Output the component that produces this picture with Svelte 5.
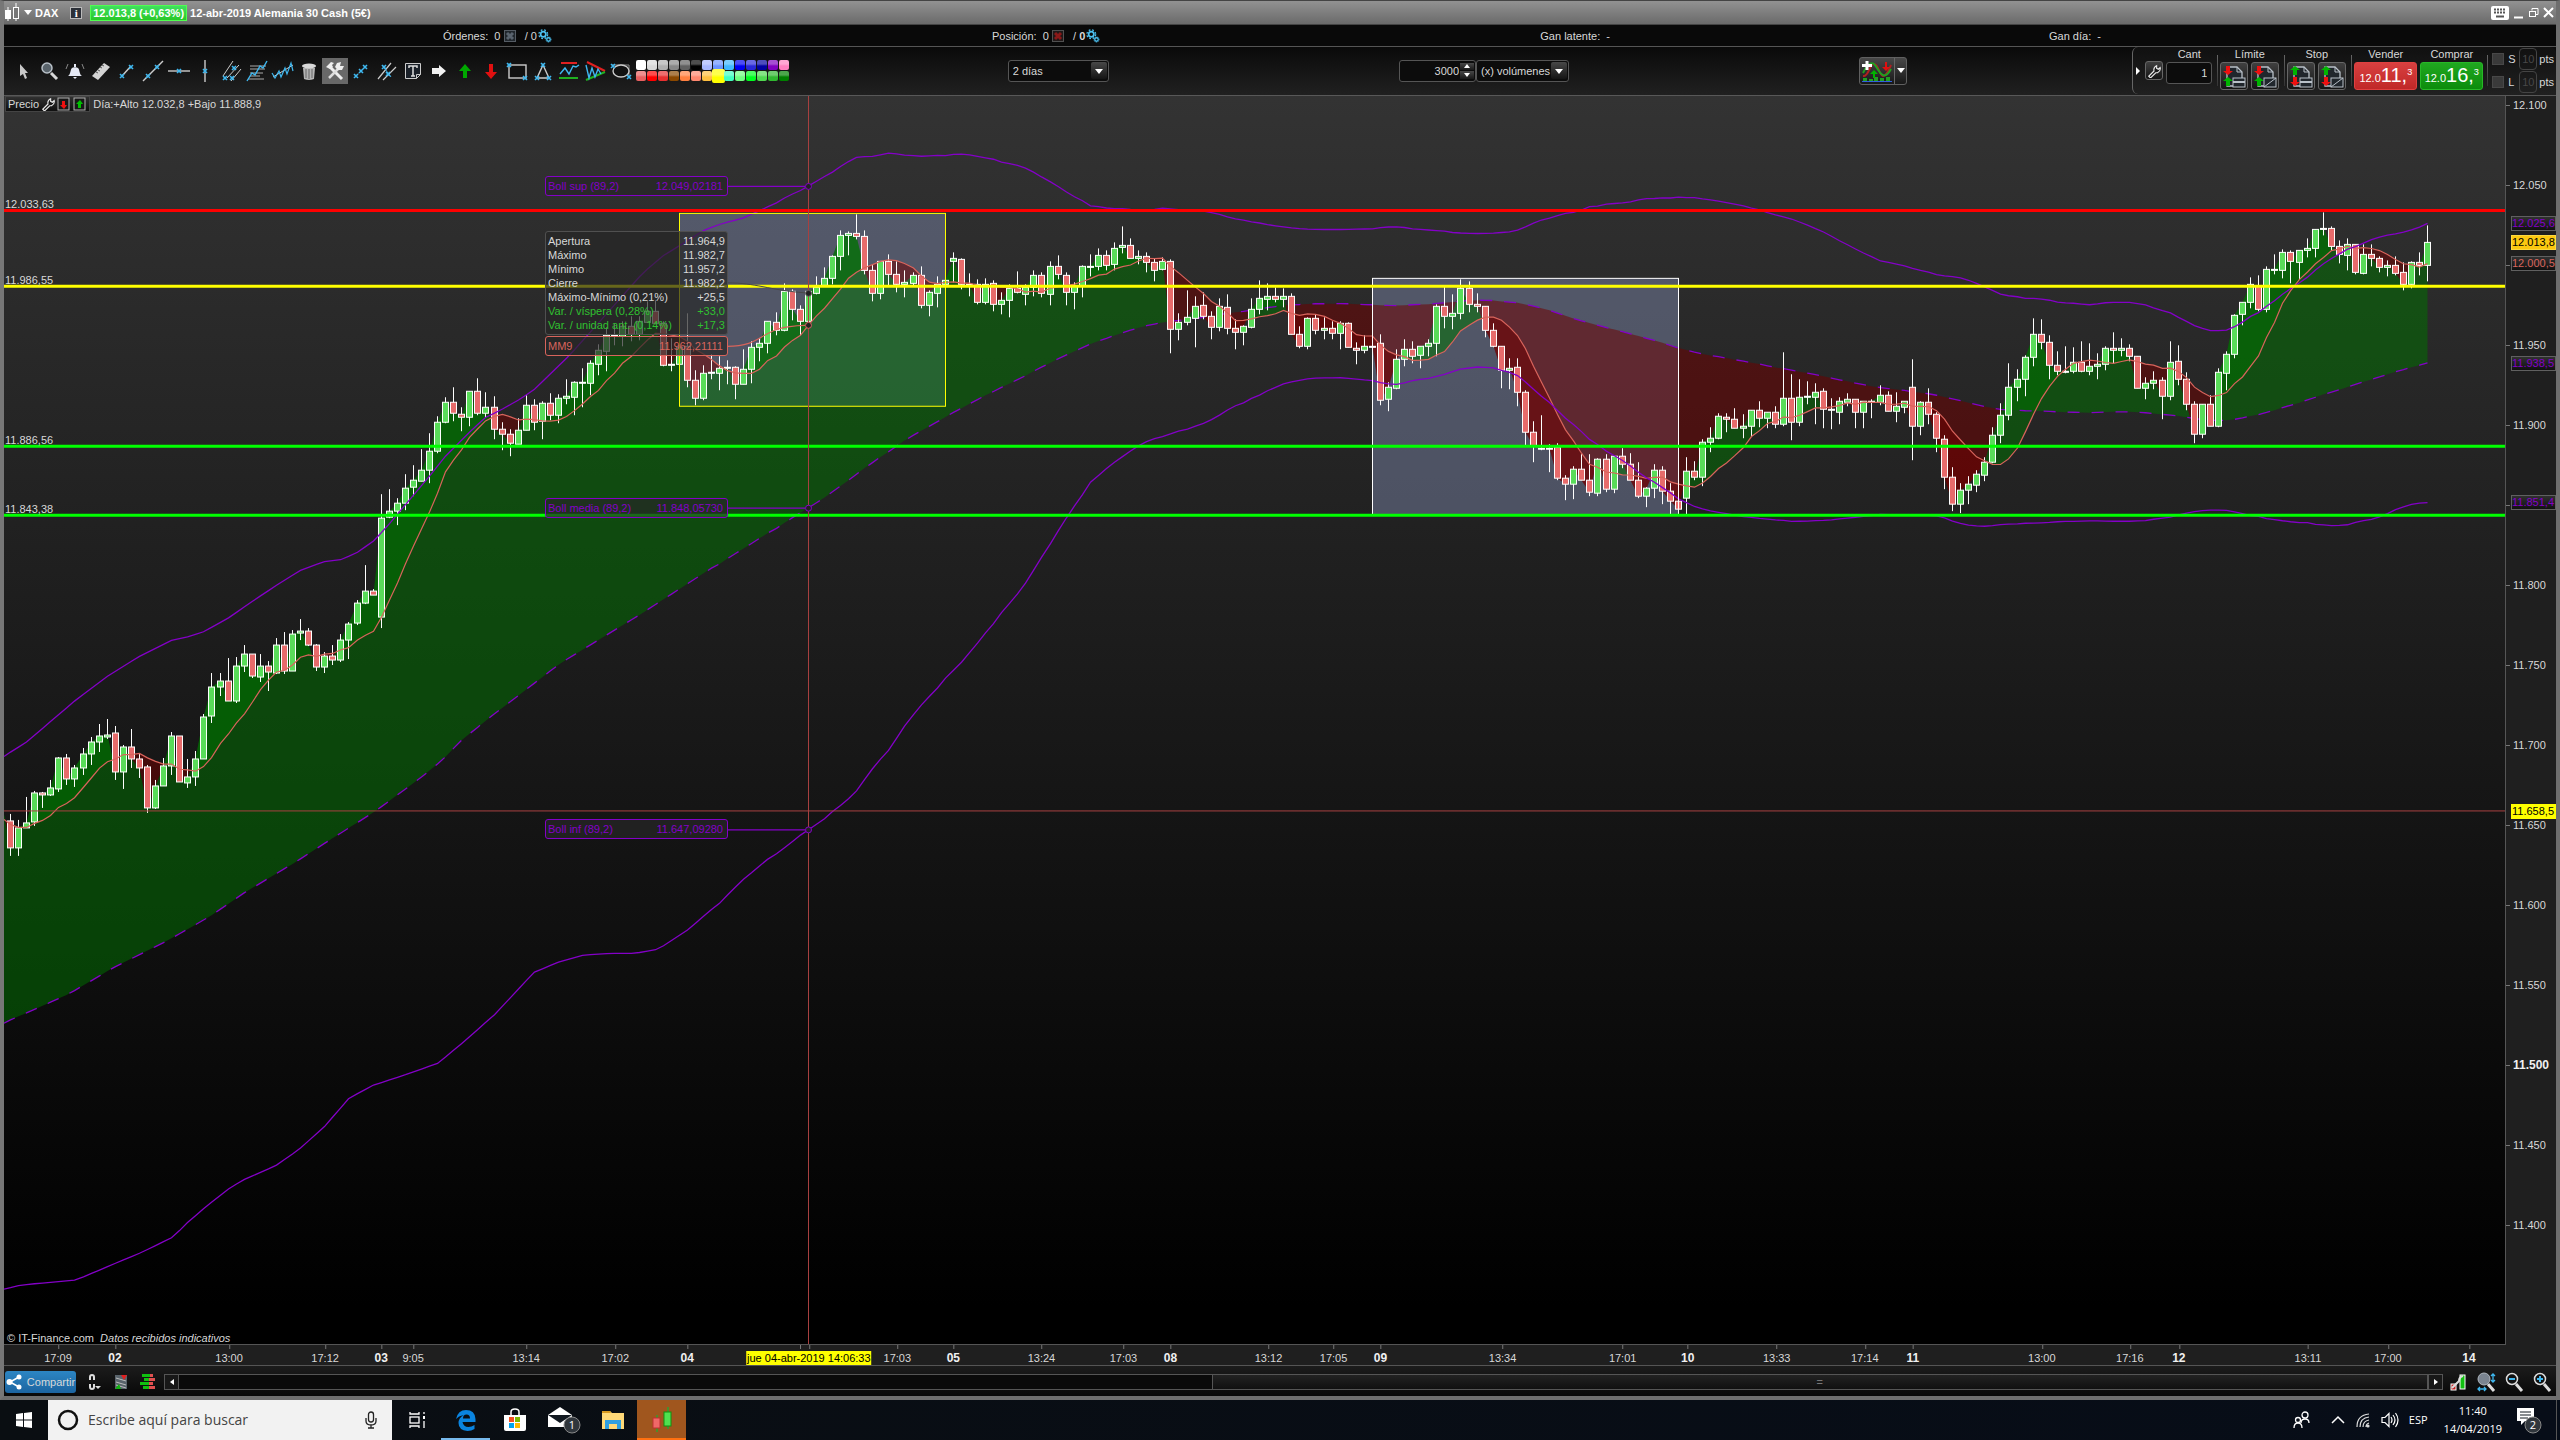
<script>
    // plot area in chart units
    const LEFT = 4;
    const TOP = 96;
    const WIDTH = 2501;
    const HEIGHT = 1249;

    // direction, high, body top, body bottom, low
    const sessions = [
        { base: 1110, bars: `d1332,1354,1434,1460 u1350,1375,1434,1460 u1282,1359,1376,1376 u1263,1270,1358,1370 d1266,1270,1277,1314
            u1230,1255,1277,1280 u1161,1165,1259,1268 d1152,1165,1229,1247 u1186,1195,1229,1253 u1134,1153,1196,1215
            u1101,1117,1154,1187 u1062,1099,1118,1148 u1047,1095,1103,1109 d1068,1090,1206,1232 u1125,1132,1206,1257
            d1077,1132,1169,1196 d1153,1168,1196,1226 d1187,1192,1314,1329 u1230,1249,1314,1317 u1164,1189,1250,1250
            u1086,1099,1190,1217 d1099,1099,1238,1238 u1167,1222,1239,1256 u1143,1168,1223,1250 u1032,1042,1169,1169
            u909,952,1040,1061 u909,934,953,978 d866,934,995,995 u861,889,995,1001 u825,853,890,908
            d853,853,920,926 u852,889,923,938 d873,889,908,963 u804,826,911,914 d786,826,905,914
            u780,794,905,905 u747,785,791,812 d774,784,827,830 d823,826,893,905 u846,859,893,911
            d825,859,872,887 u792,811,872,878 u757,763,812,869 u690,700,761,767 u585,664,701,704
            d657,664,677,677 u372,445,743,776 u357,424,443,446 u384,400,425,467 u312,355,401,422
            u285,331,353,380 u237,301,335,335 u189,244,302,341 u138,157,245,251 u81,97,158,161
            d51,97,131,153 d111,133,143,185 u64,64,143,170 d24,64,131,137 u66,111,131,143
            d78,112,179,207 d156,178,194,240 d178,193,221,258 u144,181,224,224 u75,106,182,182
            d87,106,158,182 u94,100,155,207 d69,100,137,152 u74,85,137,161` },
        { base: 450, bars: `u687,738,746,762 u693,696,741,797 w654,696,699,771 u630,639,699,737 u582,600,642,675
            u532,556,603,665 w520,556,558,585 u515,528,558,588 d500,528,553,575 u500,514,552,570
            u453,484,516,516 d450,484,520,522 d515,520,647,650 w565,643,647,665 u570,592,644,644
            d489,590,692,713 d660,690,746,767 u645,670,746,752 w612,667,671,687 u618,655,671,720
            w630,652,656,702 d650,651,704,747 u597,657,704,704 u573,591,659,699 u565,579,593,635
            u513,514,581,609 d486,516,540,557 u399,424,540,545 d417,423,479,510 d465,477,513,557
            u420,424,513,513 u378,413,431,434 u351,384,405,405 u315,318,386,402 u240,255,320,360
            u245,249,257,315 d192,249,260,269 d240,258,362,372 d344,360,431,453 u334,334,431,447
            d312,334,374,405 d333,373,404,428 u362,396,404,441 u366,375,399,407 d348,376,467,476
            u420,426,467,498 u378,402,429,471 u385,390,402,402 u306,324,335,396 d324,327,403,417` },
        { base: 540, bars: `w279,313,316,348 d297,313,366,372 u294,313,366,374 d300,310,374,395 u338,361,374,402
            u312,325,362,411 d273,324,338,339 u312,322,344,377 u270,286,322,350 d277,286,341,353
            u243,259,344,377 d225,259,284,299 d277,286,338,375 u307,320,338,387 u255,259,320,353
            w222,259,261,290 u204,226,260,272 d210,226,257,272 u186,205,254,270 u138,195,203,219
            d174,195,236,236 u210,228,235,254 d216,229,248,276 d234,247,272,303 u231,244,269,272
            d237,244,449,519 u399,427,449,480 u330,411,428,437 u350,379,416,501 d336,376,410,417
            d393,409,443,477 u354,379,443,455 d342,382,446,464 d417,445,458,507 u435,439,458,495
            u354,388,443,446 u300,355,389,404 u309,349,359,392 d321,349,359,366 u325,349,359,381
            d339,349,464,464 d438,463,500,504 u412,415,500,507 d403,415,452,462 u411,445,451,477
            d423,444,461,479 u424,430,461,507 d427,430,503,503 d486,504,511,552 u465,499,512,521
            w470,499,503,503 d462,490,660,675 u606,622,659,693 u507,538,626,628 u477,508,539,558
            d483,508,530,551 u499,499,527,564 u477,490,500,530 u372,379,491,530 d320,379,410,444
            u342,400,410,447` },
        { base: 750, bars: `u87,115,191,209 d93,115,164,186 d129,163,170,186 d169,169,242,261 d219,241,290,291
            d289,289,362,414 u324,354,362,417 d324,352,428,468 d420,427,548,585 d513,547,588,636
            w495,594,598,602 w583,595,598,666 d579,592,686,692 d675,685,704,750 u648,658,704,747
            d612,658,692,692 d612,691,728,738 u625,628,731,738 d612,628,719,726 u619,619,719,729
            d594,619,644,654 d609,643,692,692 d636,691,740,744 u711,715,740,771 u642,661,716,744
            d648,661,725,762 d700,724,755,792 d750,754,779,792 u621,664,746,792 d633,664,683,690
            u567,577,683,708 u531,565,578,606 u489,499,566,569 d489,502,509,546 d474,508,536,536
            u492,530,536,564 u481,481,530,558 d453,481,506,531 u487,487,506,534 d468,487,524,536
            u306,445,524,528 d372,445,518,570 u387,442,518,528 w393,439,443,462 u399,427,443,522
            d415,424,479,536 w444,478,482,537 u441,454,486,522 u429,449,456,468 d448,448,488,534
            u454,455,488,534 w447,454,456,504 u405,436,458,467 d423,436,485,485 u426,469,485,516` },
        { base: 540, bars: `u663,664,683,699 d537,622,738,840 u663,667,738,765 d624,667,704,732 d697,703,776,816
            d766,778,893,927 d861,892,974,993 u909,931,974,999 u888,913,932,972 u870,882,917,938
            u831,847,885,903 u741,766,848,851 u669,706,767,789 u549,622,707,720 u567,598,623,663
            u525,532,599,648 u414,463,533,558 d417,463,488,507 d465,487,557,597 d513,556,575,585
            w498,573,577,580 u501,547,575,580 d483,547,575,576 u489,559,575,585 u519,553,560,597
            u499,505,554,570 d456,505,512,550 u474,505,512,529 d492,505,530,543 d528,529,626,626
            u591,610,626,657 u573,601,611,627 d591,601,650,717 u483,547,650,660 d495,544,599,615
            d576,598,674,690 d663,673,764,789 u673,673,764,774 d645,673,738,738 u564,577,738,741
            u513,523,581,630 u402,406,524,534 u367,367,404,435 u291,313,368,384 d285,318,389,393
            u258,268,389,396 w222,268,272,282 u207,217,272,294 d210,217,245,309 u211,211,248,297
            u174,205,211,231 u147,148,206,231 w96,145,149,165 d138,145,200,210 d180,199,224,249
            u174,193,227,270 d193,193,278,282 u193,223,281,282 d192,223,236,260 d229,235,263,276
            u240,256,263,288 d229,256,281,285 d247,277,314,330 u243,247,314,326 d216,247,257,285
            u135,187,257,303` }
    ];

    const snap = (v) => Math.round(v - 0.5) + 0.5;

    const candles = sessions
        .flatMap((s) => s.bars.split(/\s+/).map((bar) => ({ base: s.base, bar })))
        .map(({ base, bar }, i) => {
            const [high, top, bottom, low] = bar.slice(1).split(',').map((v) => snap((Number(v) + base) / 3));
            return { x: 10.5 + 8 * i + Math.floor((i + 9) / 17.2), kind: bar[0], high, top, bottom, low };
        });

    const closes = candles.map((c) => (c.kind === 'd' ? c.bottom : c.top));

    // values carried over from bars before the first visible one
    const mmStart = [825, 828, 828, 824, 821, 816, 808, 804];
    const supStart = [[5, 756], [26, 743], [74, 702], [107, 677], [139, 657], [171, 641], [189, 637], [204, 632], [229, 618],
        [252, 602], [276, 586], [300, 571], [324, 562], [341, 560], [357, 553], [374, 541], [386, 528], [397, 515], [429, 477],
        [445, 457], [469, 433], [485, 418], [503, 409], [519, 400], [534, 390], [570, 355], [643, 273], [663, 256], [703, 231], [720, 224]];
    const midStart = [[5, 1023], [35, 1010], [70, 994], [114, 968], [168, 941], [210, 917], [245, 893], [295, 863], [337, 836],
        [375, 812], [421, 778], [442, 761], [460, 742], [491, 717], [560, 664], [640, 615], [720, 563]];
    const infStart = [[5, 1290], [21, 1286], [42, 1284], [76, 1281], [116, 1264], [140, 1254], [173, 1238], [188, 1223], [209, 1205],
        [231, 1188], [245, 1180], [275, 1167], [298, 1151], [324, 1128], [349, 1099], [373, 1086], [407, 1075], [438, 1064],
        [462, 1044], [495, 1015], [534, 973], [558, 963], [582, 956], [610, 954], [635, 954], [658, 950], [687, 931], [720, 903]];

    function lerp(knots, x) {
        const k = knots.findIndex((p) => p[0] >= x);
        if (k < 1) return k === 0 ? knots[0][1] : knots[knots.length - 1][1];
        const [x0, y0] = knots[k - 1];
        const [x1, y1] = knots[k];
        return y0 + ((y1 - y0) * (x - x0)) / (x1 - x0);
    }

    function stats(i, n) {
        const part = closes.slice(i - n + 1, i + 1);
        const mean = part.reduce((a, b) => a + b, 0) / n;
        const dev = Math.sqrt(part.reduce((a, b) => a + (b - mean) ** 2, 0) / n);
        return { mean, dev };
    }

    const mm9 = closes.map((c, i) => (i < 8 ? mmStart[i] : stats(i, 9).mean));
    const boll = candles.map((c, i) => {
        if (i < 88) return { sup: lerp(supStart, c.x), mid: lerp(midStart, c.x), inf: lerp(infStart, c.x) };
        const { mean, dev } = stats(i, 89);
        return { sup: mean - 2 * dev, mid: mean, inf: mean + 2 * dev };
    });

    const xs = [LEFT, ...candles.map((c) => c.x)];
    const price = [815, ...closes];
    const fast = [820, ...mm9];
    const sup = [757, ...boll.map((b) => b.sup)];
    const mid = [1024, ...boll.map((b) => b.mid)];
    const inf = [1290, ...boll.map((b) => b.inf)];

    const line = (ys) => xs.map((x, i) => `${x},${ys[i].toFixed(1)}`).join(' ');

    // area between two series, kept only where pick() chooses the first one
    function area(a, b, pick) {
        const upper = [];
        const lower = [];
        xs.forEach((x, i) => {
            if (i > 0) {
                const d0 = a[i - 1] - b[i - 1];
                const d1 = a[i] - b[i];
                if (d0 * d1 < 0) {
                    const t = d0 / (d0 - d1);
                    const cx = xs[i - 1] + (x - xs[i - 1]) * t;
                    const cy = a[i - 1] + (a[i] - a[i - 1]) * t;
                    upper.push([cx, cy]);
                    lower.push([cx, cy]);
                }
            }
            upper.push([x, pick(a[i], b[i])]);
            lower.push([x, b[i]]);
        });
        return [...upper, ...lower.reverse()].map((p) => p[0].toFixed(1) + ',' + p[1].toFixed(1)).join(' ');
    }

    const fills = [
        { kind: 'rise', points: area(price, mid, Math.min) },
        { kind: 'fall', points: area(price, mid, Math.max) },
        { kind: 'rise', points: area(price, fast, Math.min) },
        { kind: 'fall', points: area(price, fast, Math.max) }
    ];

    const levels = [
        { label: '12.033,63', y: 210.5, color: '#ff0000' },
        { label: '11.986,55', y: 286.5, color: '#ffff00' },
        { label: '11.886,56', y: 446.5, color: '#00ff00' },
        { label: '11.843,38', y: 515.5, color: '#00ff00' }
    ];

    const priceTicks = ['12.100', '12.050', '', '11.950', '11.900', '', '11.800', '11.750', '11.700', '11.650', '11.600', '11.550', '11.500', '11.450', '11.400']
        .map((label, i) => ({ label, y: 104.5 + i * 80.05 }));

    const tags = [
        { label: '12.025,6', y: 223, kind: 'boll' },
        { label: '12.000,5', y: 263, kind: 'mm' },
        { label: '12.013,8', y: 242, kind: 'last' },
        { label: '11.938,5', y: 363, kind: 'boll' },
        { label: '11.851,4', y: 502, kind: 'boll' },
        { label: '11.658,5', y: 811, kind: 'cursor' }
    ];

    const times = [['17:09', 58], ['02', 115], ['13:00', 229], ['17:12', 325], ['03', 381], ['9:05', 413], ['13:14', 526], ['17:02', 615],
        ['04', 687], ['', 800], ['17:03', 897], ['05', 953], ['13:24', 1041], ['17:03', 1123], ['08', 1170], ['13:12', 1268], ['17:05', 1333],
        ['09', 1380], ['13:34', 1502], ['17:01', 1622], ['10', 1687], ['13:33', 1776], ['17:14', 1864], ['11', 1912], ['13:00', 2041],
        ['17:16', 2129], ['12', 2178], ['13:11', 2307], ['17:00', 2387], ['14', 2468]];

    const quote = [
        ['Apertura', '11.964,9'],
        ['Máximo', '11.982,7'],
        ['Mínimo', '11.957,2'],
        ['Cierre', '11.982,2'],
        ['Máximo-Mínimo (0,21%)', '+25,5'],
        ['Var. / víspera (0,28%)', '+33,0'],
        ['Var. / unidad ant. (0,14%)', '+17,3']
    ];

    const readouts = [
        { name: 'Boll sup (89,2)', value: '12.049,02181', y: 176, kind: 'boll' },
        { name: 'MM9', value: '11.962,21111', y: 336, kind: 'mm' },
        { name: 'Boll media (89,2)', value: '11.848,05730', y: 498, kind: 'boll' },
        { name: 'Boll inf (89,2)', value: '11.647,09280', y: 820, kind: 'boll' }
    ];

    const px = (x) => ((x - LEFT) / WIDTH) * 100 + '%';
    const py = (y) => ((y - TOP) / HEIGHT) * 100 + '%';

    const cross = (x, y) => `<path d="M${x - 2} ${y - 2}l4 4m0-4l-4 4" stroke="#3fb8f0" stroke-width="1.6"/>`;

    const tools = [
        { name: 'Cursor', art: '<path d="M9 5v12l3-2 2 5 2-1-2-5h3z" fill="#c8c8c8"/>' },
        { name: 'Zoom', art: '<path d="M14 14l6 6" stroke="#d8d8d8" stroke-width="3"/><circle cx="10" cy="9" r="5" fill="#59636b" stroke="#b8c0c8" stroke-width="1.5"/>' },
        { name: 'Alarma', art: '<path d="M5 17c3-2 2-6 4-8 1-1 5-1 6 0 2 2 1 6 4 8z" fill="#e4e8f4"/><path d="M10 18h4l-2 2zM11 5h2v3h-2z" fill="#e4e8f4"/><path d="M5 5L3 10M19 5l2 5" stroke="#888" fill="none"/>' },
        { name: 'Regla', art: '<path d="M3 17L15 4l6 4L9 21z" fill="#d4d4d4"/><path d="M7 13l2 1m0-3l2 1m0-4l2 1m0-3l2 1" stroke="#555"/>' },
        { name: 'Segmento', art: '<path d="M7 17l9-10" stroke="#ccc" stroke-width="1.4"/>' + cross(7, 17) + cross(16, 8) },
        { name: 'Recta', art: '<path d="M2 22L22 2" stroke="#ccc" stroke-width="1.4"/>' + cross(7, 17) + cross(16, 8) },
        { name: 'Horizontal', art: '<path d="M1 12h22" stroke="#ccc" stroke-width="1.4"/>' + cross(12, 12) },
        { name: 'Vertical', art: '<path d="M12 1v22" stroke="#ccc" stroke-width="1.4"/>' + cross(12, 12) },
        { name: 'Canal', art: '<path d="M4 17L14 2M8 19L20 6M12 22L22 10" stroke="#ccc"/>' + cross(6, 19) + cross(13, 19) + cross(15, 9) },
        { name: 'Fibonacci', art: '<path d="M5 7h16M5 10h15M5 14h13M5 17h10M3 20h16" stroke="#aaa"/><path d="M2 22l5-8 3 2 5-9 3 2 4-7" stroke="#3fb8f0" fill="none" stroke-width="1.4"/>' },
        { name: 'Regresión', art: '<path d="M2 18L22 6" stroke="#ccc"/><path d="M1 14l3 5 4-7 2 6 4-9 2 6 4-11 2 8" stroke="#3fb8f0" fill="none" stroke-width="1.2"/>' },
        { name: 'Borrar', art: '<path d="M6 9h12l-1 11q-5 2-10 0z" fill="#b4b4b4"/><ellipse cx="12" cy="7" rx="7" ry="2.500" fill="#d8d8d8"/><path d="M9 10v9M12 10v10M15 10v9" stroke="#666"/>' },
        { name: 'Ajustes', on: true, art: '<path d="M7 8l12 12" stroke="#eee" stroke-width="3"/><path d="M17 8L6 19" stroke="#ddd" stroke-width="2.500"/><path d="M3 8l5-5 3 1-2 2 1 2-3 2-2-1zM14 4l4-1-1 4 4 0-2 4-4 0-3-3z" fill="#eee"/>' },
        { name: 'Mover punto', art: '<path d="M7 17L17 7" stroke="#ccc" stroke-dasharray="3 1"/>' + cross(7, 17) + cross(16, 8) + cross(12, 12) },
        { name: 'Paralelas', art: '<path d="M3 20L16 4M8 21L21 8" stroke="#ccc" stroke-width="1.2"/>' + cross(9, 8) + cross(13, 15) + '<path d="M7 6l9 12" stroke="#3fb8f0"/>' },
        { name: 'Texto', art: '<path d="M4.500 4.500h15v11l-4 4h-11z" fill="#1a2028" stroke="#ccc"/><path d="M15.500 19.500v-4h4" fill="none" stroke="#ccc"/><path d="M8 9V7h8v2M12 7v10m-2 0h4" stroke="#ddd" fill="none" stroke-width="1.500"/>' },
        { name: 'Flecha derecha', art: '<path d="M5 9h7V6l7 6-7 6v-3H5z" fill="#f2f2f2"/>' },
        { name: 'Flecha arriba', art: '<path d="M12 5l6 7h-4v7h-4v-7H6z" fill="#00a800"/>' },
        { name: 'Flecha abajo', art: '<path d="M12 20l6-7h-4V5h-4v8H6z" fill="#e01010"/>' },
        { name: 'Rectángulo', art: '<rect x="4" y="6" width="17" height="13" fill="#111" stroke="#ccc" stroke-width="1.400"/>' + cross(4, 6) + cross(20, 19) },
        { name: 'Triángulo', art: '<path d="M12 6l6 13H6z" fill="none" stroke="#ccc" stroke-width="1.400"/>' + cross(12, 6) + cross(6, 19) + cross(18, 19) },
        { name: 'Soporte', art: '<path d="M4 4h16" stroke="#e02020" stroke-width="2"/><path d="M2 19h19" stroke="#20b020" stroke-width="2"/><path d="M3 15l5-6 4 6 4-8 3 1 3-2" stroke="#3fb8f0" fill="none" stroke-width="1.400"/>' },
        { name: 'Patrones', art: '<path d="M4 3l18 9" stroke="#e02020" stroke-width="2"/><path d="M3 21l19-8" stroke="#20b020" stroke-width="2"/><path d="M3 6l3 13 3-10 3 9 3-8 3 5" stroke="#3fb8f0" fill="none" stroke-width="1.400"/>' },
        { name: 'Elipse', art: '<path d="M3 6h17v13" stroke="#888" fill="none"/><ellipse cx="12" cy="12" rx="8" ry="6" fill="#111" stroke="#ccc" stroke-width="1.400"/>' + cross(4, 7) + cross(20, 18) }
    ];

    const palette = ['#ffffff', '#d8d8d8', '#b0b0b0', '#888888', '#606060', '#000000', '#a8b8ff', '#6a94ff', '#40b8ff', '#0000f0', '#2828d8', '#0000a0', '#8000c0', '#ff80c0',
        '#e86060', '#ff0000', '#e83030', '#8a4800', '#ff8040', '#ff8870', '#ffc040', '#ffff00', '#40ffc0', '#70ff80', '#00ff20', '#50d850', '#30b830', '#008000'];
    const picked = '#ffff00';

    const sheet = '<path d="M5 3h10l5 5v14H5z" fill="#20262c" stroke="#b8c0c8" stroke-width="1.300"/><path d="M15 3v5h5" fill="none" stroke="#b8c0c8"/>';
    const redDown = (x, y) => `<path d="M${x} ${y + 9}l-5-4h3V${y}h4v5h3z" fill="#ee1010"/>`;
    const greenUp = (x, y) => `<path d="M${x} ${y}l-5 4h3v5h4v-5h3z" fill="#00b400"/>`;
    const flat = '<rect x="11" y="14" width="12" height="9" fill="#20262c" stroke="#b8c0c8"/><path d="M11 18h12" stroke="#b8c0c8" stroke-width="2"/>';
    const slant = '<rect x="11" y="14" width="12" height="9" fill="#20262c" stroke="#b8c0c8"/><path d="M11 23l12-9" stroke="#b8c0c8"/>';
    const orderGroups = [
        { label: 'Límite', buttons: [sheet + redDown(6, 2) + greenUp(6, 13) + flat, sheet + redDown(6, 2) + greenUp(6, 13) + slant] },
        { label: 'Stop', buttons: [sheet + greenUp(6, 2) + redDown(6, 13) + flat, sheet + greenUp(6, 2) + redDown(6, 13) + slant] }
    ];

    let quantity = '1';
    let volume = '3000';
    let stopPts = '10';
    let limitPts = '10';
    let search = '';
</script>

{#snippet wrench()}
    <svg class="wrench" viewBox="0 0 16 16"><path d="M2 14l6-6q-1-4 3-6l0 3 2 1 2-2q1 4-3 6l-2 0-6 6z" fill="#181818" stroke="#e8e8e8" stroke-width="1.300" /></svg>
{/snippet}

{#snippet gears()}
    <svg class="gears" viewBox="0 0 16 16" fill="none" stroke="#4cc0f0">
        <circle cx="6" cy="6" r="3" stroke-width="2" /><circle cx="6" cy="6" r="5" stroke-dasharray="2 2" stroke-width="1.500" />
        <circle cx="12" cy="12" r="2" stroke-width="1.500" /><circle cx="12" cy="12" r="3" stroke-dasharray="1 1" />
    </svg>
{/snippet}

<main>
    <div class="window">
        <header class="title">
            <svg class="candle-logo" viewBox="0 0 16 24"><path d="M4 6v14M12 2v18" stroke="#fff" /><rect x="1" y="9" width="6" height="9" fill="#fff" /><rect x="9.500" y="6.500" width="5" height="11" fill="#777" stroke="#fff" /></svg>
            <span class="caret"></span>
            <strong>DAX</strong>
            <button class="info" aria-label="Información">i</button>
            <strong class="change">12.013,8 (+0,63%)</strong>
            <strong class="instrument">12-abr-2019 Alemania 30 Cash (5€)</strong>
            <div class="controls">
                <button aria-label="Teclado"><svg width="18" height="14" viewBox="0 0 18 14"><rect width="18" height="14" rx="2" fill="#fff" /><path d="M3 3.500h12M3 6.500h12" stroke="#555" stroke-dasharray="2 1" stroke-width="2" /><path d="M5 10.500h8" stroke="#555" stroke-width="2" /></svg></button>
                <button aria-label="Minimizar"><svg width="11" height="14" viewBox="0 0 11 14"><path d="M1 11.500h9" stroke="#fff" stroke-width="2" /></svg></button>
                <button aria-label="Restaurar"><svg width="11" height="14" viewBox="0 0 11 14" fill="none" stroke="#fff"><path d="M4 4.500V2.500h6v6H8" /><rect x="1.500" y="5.500" width="6" height="5" /></svg></button>
                <button aria-label="Cerrar"><svg width="11" height="14" viewBox="0 0 11 14"><path d="M1 2l9 9M10 2l-9 9" stroke="#fff" stroke-width="2" /></svg></button>
            </div>
        </header>

        <section class="status">
            <span>Órdenes:&nbsp; 0 <svg class="doc" viewBox="0 0 12 12"><rect x=".5" y=".5" width="11" height="11" fill="#20262c" stroke="#555c64" /><path d="M3 3l6 6M9 3l-6 6" stroke="#59636e" stroke-width="3" /></svg> &nbsp; / 0{@render gears()}</span>
            <span>Posición:&nbsp; 0 <svg class="doc" viewBox="0 0 12 12"><rect x=".5" y=".5" width="11" height="11" fill="#201818" stroke="#505050" /><path d="M3 3l6 6M9 3l-6 6" stroke="#8a1818" stroke-width="3" /></svg> &nbsp; / <b>0</b>{@render gears()}</span>
            <span>Gan latente:&nbsp; -</span>
            <span>Gan día:&nbsp; -</span>
        </section>

        <section class="toolbar">
            <div class="tools">
                {#each tools as tool}
                    <button class="tool" class:on={tool.on} aria-label={tool.name}>
                        <svg viewBox="0 0 24 24">{@html tool.art}</svg>
                    </button>
                {/each}
            </div>
            <div class="palette">
                {#each palette as color}
                    <button class="swatch" class:picked={color === picked} style="background-color: {color}" aria-label={color}></button>
                {/each}
            </div>
            <div class="gap side"></div>
            <label class="pick period">
                <select aria-label="Periodo"><option>2 días</option></select>
                <span class="drop"></span>
            </label>
            <div class="gap"></div>
            <div class="units">
                <div class="spin">
                    <input aria-label="Cantidad de unidades" bind:value={volume} />
                    <div class="spinners">
                        <button aria-label="Más"><i class="up"></i></button>
                        <button aria-label="Menos"><i class="down"></i></button>
                    </div>
                </div>
                <label class="pick unit">
                    <select aria-label="Unidad"><option>(x) volúmenes</option></select>
                    <span class="drop"></span>
                </label>
            </div>
            <div class="gap"></div>
            <div class="indicators">
                <button aria-label="Añadir indicador">
                    <svg width="32" height="24" viewBox="0 0 32 24" fill="none">
                        <path d="M2 17C8 18 8 5 13 5s5 12 9 12 5-5 8-11" stroke="#b02020" stroke-width="2" />
                        <path d="M2 14C8 2 12 2 16 9s8 12 14 1" stroke="#20a020" stroke-width="2" />
                        <path d="M2 22v-3h4v3m2 0v-2h4v2m1 0v-4h4v4m2 0v-3h4v3m2 0v-4h4v4" fill="#20a020" />
                        <path d="M1 22.500h30" stroke="#3060e0" />
                        <path d="M6 2v9M1 6.500h10" stroke="#fff" stroke-width="3" />
                        <path d="M25 12l-4-4h3V3h2v5h3z" fill="#e01010" /><path d="M13 11l-4 4h3v4h2v-4h3z" fill="#00b400" />
                    </svg>
                </button>
                <button class="more" aria-label="Más indicadores"><span class="caret"></span></button>
            </div>
            <div class="gap side"></div>

            <div class="trade">
                <span class="expand"></span>
                <button class="box setup" aria-label="Configurar">{@render wrench()}</button>
                <div class="field">
                    <label for="cant">Cant</label>
                    <input id="cant" bind:value={quantity} />
                </div>
                {#each orderGroups as group}
                    <div class="field group">
                        <span>{group.label}</span>
                        <div class="pair">
                            {#each group.buttons as art, i}
                                <button class="box order" aria-label="{group.label} {i + 1}"><svg viewBox="0 0 24 24">{@html art}</svg></button>
                            {/each}
                        </div>
                    </div>
                {/each}
                <div class="field group">
                    <span>Vender</span>
                    <button class="deal sell">12.0<b>11,</b><sup>3</sup></button>
                </div>
                <div class="field last">
                    <span>Comprar</span>
                    <button class="deal buy">12.0<b>16,</b><sup>3</sup></button>
                </div>
                <div class="stops">
                    <div><input type="checkbox" id="s" /><label for="s">S</label><input class="pts" aria-label="Puntos S" bind:value={stopPts} /><span>pts</span></div>
                    <div><input type="checkbox" id="l" /><label for="l">L</label><input class="pts" aria-label="Puntos L" bind:value={limitPts} /><span>pts</span></div>
                </div>
            </div>
        </section>

        <section class="chart">
            <div class="plot">
                <svg class="graph" viewBox="{LEFT} {TOP} {WIDTH} {HEIGHT}" preserveAspectRatio="none">
                    <rect class="zone" x="679.500" y="213.500" width="266" height="193" />
                    <rect class="zone" x="1372.500" y="278.500" width="306" height="237" />
                    {#each fills as fill}
                        <polygon class={fill.kind} points={fill.points} />
                    {/each}
                    <polyline class="boll dashed" points={line(mid)} />
                    {#each candles as c}
                        <line class="wick" x1={c.x} x2={c.x} y1={c.high} y2={c.low} />
                        <rect class="body {c.kind}" x={c.x - 3} y={c.top} width="6" height={Math.max(c.bottom - c.top, 1)} />
                    {/each}
                    <polyline class="mm" points={line(fast)} />
                    <polyline class="boll" points={line(sup)} />
                    <polyline class="boll" points={line(inf)} />
                    <rect x="679.500" y="213.500" width="266" height="193" fill="none" stroke="#ffff00" />
                    <rect x="1372.500" y="278.500" width="306" height="237" fill="none" stroke="#ffffff" />
                    {#each levels as level}
                        <line x1="4" x2="2505" y1={level.y} y2={level.y} stroke={level.color} stroke-width="3" />
                    {/each}
                    <path class="cross" d="M4 811.500H2505M808.500 96V1345" />
                    <path class="boll" d="M727 186.500h78M727 508.500h78M727 830.500h78" />
                    <path d="M727 283c30 0 40 7 78 10" fill="none" stroke="#484848" />
                    <path class="mm" d="M727 346.500c40 0 30-20 78-21" />
                    {#each [186, 508, 830] as y}
                        <circle cx="808.500" cy={y + 0.5} r="3" fill="#222" stroke="#8400c8" />
                    {/each}
                    <circle cx="808.500" cy="293.500" r="3" fill="#222" stroke="#606060" />
                    <circle cx="808.500" cy="325.500" r="3" fill="#222" stroke="#d86060" />
                </svg>

                <div class="legend">
                    <div class="series">
                        Precio {@render wrench()}
                        <svg viewBox="0 0 14 14"><rect x="1" y="1" width="11" height="12" fill="#181818" stroke="#b0b0b0" /><path d="M7 12L3 8h2V4h3v4h2z" fill="#ee1010" /></svg>
                        <svg viewBox="0 0 14 14"><rect x="1" y="1" width="11" height="12" fill="#181818" stroke="#b0b0b0" /><path d="M7 3L3 7h2v4h3V7h2z" fill="#00c000" /></svg>
                    </div>
                    <span>Día:+Alto 12.032,8 +Bajo 11.888,9</span>
                </div>

                {#each levels as level}
                    <span class="level" style="top: {py(level.y)}">{level.label}</span>
                {/each}

                <dl class="readout quote" style="left: {px(545)}; top: {py(231)}">
                    {#each quote as [name, value], i}
                        <div class:gain={i > 4}><dt>{name}</dt><dd>{value}</dd></div>
                    {/each}
                </dl>
                {#each readouts as r}
                    <dl class="readout {r.kind}" style="left: {px(545)}; top: {py(r.y)}">
                        <div><dt>{r.name}</dt><dd>{r.value}</dd></div>
                    </dl>
                {/each}

                <p class="credit">© IT-Finance.com&nbsp; <i>Datos recibidos indicativos</i></p>
            </div>

            <div class="prices">
                {#each priceTicks as tick}
                    <span class="tick" class:strong={tick.label === '11.500'} style="top: {py(tick.y)}">{tick.label}</span>
                {/each}
                {#each tags as tag}
                    <span class="tag {tag.kind}" style="top: {py(tag.y)}">{tag.label}</span>
                {/each}
            </div>

            <div class="times">
                {#each times as [label, x]}
                    <span class:strong={label.length === 2} style="left: {px(x)}">{label}</span>
                {/each}
                <span class="now" style="left: {px(808.5)}">jue 04-abr-2019 14:06:33</span>
            </div>
        </section>

        <footer class="bottom">
            <button class="share">
                <svg width="16" height="16" viewBox="0 0 16 16"><path d="M13 3L4 8l9 5" stroke="#fff" stroke-width="1.500" fill="none" /><circle cx="13" cy="3" r="2.500" fill="#fff" /><circle cx="3.500" cy="8" r="3" fill="#fff" /><circle cx="13" cy="13" r="2.500" fill="#fff" /></svg>
                Compartir
            </button>
            <button class="mini" aria-label="Enlazar"><svg viewBox="0 0 18 18" fill="none" stroke="#ddd" stroke-width="2"><path d="M5 7V4q0-2 2-2t2 2v3M5 11v3q0 2 2 2t2-2v-3" /><path d="M10 13h6l-3 3z" fill="#ddd" stroke="none" /></svg></button>
            <button class="mini" aria-label="Plantilla"><svg viewBox="0 0 18 18"><rect x="3" y="2" width="12" height="14" fill="#59636b" /><path d="M4 5l10 3M4 9l10 3M4 12l10 3" stroke="#bbb" /><path d="M9 2h6l-3 5z" fill="#e02020" /><path d="M3 16l4-5 2 5z" fill="#10b010" /></svg></button>
            <button class="mini book" aria-label="Libro de órdenes"><svg viewBox="0 0 18 18"><path d="M3 2.500h8M5 6.500h5M1 10.500h9M4 14.500h6" stroke="#10c010" stroke-width="3" /><path d="M11 2.500h3M10 6.500h6M10 10.500h4M10 14.500h6" stroke="#e05050" stroke-width="3" /></svg></button>
            <div class="scroll">
                <button aria-label="Desplazar a la izquierda"><i class="prev"></i></button>
                <div class="track"><div class="thumb">=</div></div>
                <button aria-label="Desplazar a la derecha"><i class="next"></i></button>
            </div>
            <button class="zoom" aria-label="Propiedades"><svg viewBox="0 0 20 20"><rect x="12" y="3" width="5" height="14" fill="#10c010" stroke="#fff" /><rect x="3" y="12" width="5" height="6" fill="#c02020" stroke="#fff" /><path d="M4 16l7-7q0-4 4-5" stroke="#ddd" stroke-width="2" fill="none" /></svg></button>
            <button class="zoom" aria-label="Ajustar"><svg viewBox="0 0 20 20"><path d="M12 12l6 7" stroke="#ddd" stroke-width="3" /><circle cx="8" cy="7" r="6" fill="#7a8490" stroke="#b0b8c0" /><path d="M17 2v8m-2-6l2-2 2 2m-4 4l2 2 2-2M2 17h8m-6-2l-2 2 2 2m4-4l2 2-2 2" stroke="#3fb8f0" fill="none" stroke-width="1.300" /></svg></button>
            <button class="zoom" aria-label="Alejar"><svg viewBox="0 0 20 20"><path d="M12 12l6 7" stroke="#ddd" stroke-width="3" /><circle cx="8" cy="7" r="5.500" fill="#111" stroke="#ddd" stroke-width="1.500" /><path d="M5 7h6" stroke="#3fb8f0" stroke-width="2" /></svg></button>
            <button class="zoom" aria-label="Acercar"><svg viewBox="0 0 20 20"><path d="M12 12l6 7" stroke="#ddd" stroke-width="3" /><circle cx="8" cy="7" r="5.500" fill="#111" stroke="#ddd" stroke-width="1.500" /><path d="M5 7h6M8 4v6" stroke="#3fb8f0" stroke-width="2" /></svg></button>
        </footer>
    </div>

    <nav class="taskbar">
        <button class="start" aria-label="Inicio"><svg width="16" height="16" viewBox="0 0 16 16"><path d="M0 2l7-1v6.500H0zM8 1l8-1v7.500H8zM0 8.500h7V15l-7-1zM8 8.500h8V16l-8-1z" fill="#fff" /></svg></button>
        <label class="search">
            <svg width="22" height="22" viewBox="0 0 22 22"><circle cx="11" cy="11" r="9" fill="none" stroke="#111" stroke-width="2.500" /></svg>
            <input placeholder="Escribe aquí para buscar" bind:value={search} />
            <svg width="14" height="18" viewBox="0 0 14 18" fill="none" stroke="#222" stroke-width="1.300"><rect x="4.500" y="1" width="5" height="10" rx="2.500" /><path d="M2 7v3q0 4 5 4t5-4V7M7 14v3M4 17h6" /></svg>
        </label>
        <button class="app" aria-label="Vista de tareas"><svg width="18" height="18" viewBox="0 0 18 18" fill="none" stroke="#fff" stroke-width="1.300"><path d="M2 1v2h9V1M2 17v-2h9v2M16 1v2M16 10v7" /><rect x="2" y="6" width="9" height="6" /><path d="M16 5v3" stroke-width="2" /></svg></button>
        <button class="app open" aria-label="Edge"><svg width="22" height="22" viewBox="0 0 22 22"><path d="M1 10Q3 1 11 1q9 0 9.500 9v3H7.500q1 5 6 5 3 0 6-2v4q-3 2-7 2-9-1-9-8 0-5 5-8-5 1-7.500 4zM8 9.500h7q0-4-3.500-4T8 9.500z" fill="#0a84e0" /></svg></button>
        <button class="app" aria-label="Tienda"><svg width="24" height="24" viewBox="0 0 24 24"><path d="M8 7V4q0-3 4-3t4 3v3" fill="none" stroke="#fff" stroke-width="1.500" /><path d="M1 7h22v14q0 2-2 2H3q-2 0-2-2z" fill="#fff" /><path d="M6 9h5v5H6z" fill="#f25022" /><path d="M12 9h5v5h-5z" fill="#7fba00" /><path d="M6 15h5v5H6z" fill="#00a4ef" /><path d="M12 15h5v5h-5z" fill="#ffb900" /></svg></button>
        <button class="app" aria-label="Correo"><svg width="34" height="28" viewBox="0 0 34 28"><path d="M1 9l12-8 12 8v12H1z" fill="#fff" /><path d="M1 9h24l-12 8z" fill="#111820" /><circle cx="25" cy="19" r="8" fill="#30363c" stroke="#888" /><text x="25" y="23" text-anchor="middle" fill="#fff" font-size="11">1</text></svg></button>
        <button class="app" aria-label="Explorador"><svg width="22" height="20" viewBox="0 0 22 20"><path d="M0 1h8l2 2h12v16H0z" fill="#ffd978" /><path d="M0 1h8l1 2H0z" fill="#d89a20" /><path d="M3 10h16v9h-4v-5H7v5H3z" fill="#2f9fe0" /></svg></button>
        <button class="app active" aria-label="ProRealTime"><svg width="22" height="26" viewBox="0 0 22 26"><path d="M6 8v17M17 0v22" stroke="#30a030" stroke-width="1.500" /><rect x="2" y="11" width="7" height="10" fill="#f06868" stroke="#c03030" /><rect x="13" y="5" width="7" height="14" fill="#50e050" stroke="#109010" /></svg></button>
        <div class="tray">
            <svg width="18" height="18" viewBox="0 0 18 18" fill="none" stroke="#fff" stroke-width="1.300"><circle cx="12" cy="4" r="3" /><path d="M8 12q0-4 4-4t4 4" /><circle cx="5" cy="9" r="2.500" /><path d="M1 17q0-5 4-5t4 5" /></svg>
            <svg class="chevron" width="14" height="10" viewBox="0 0 14 10"><path d="M1 8l6-6 6 6" fill="none" stroke="#fff" stroke-width="1.500" /></svg>
            <svg width="16" height="16" viewBox="0 0 16 16" fill="none" stroke="#ddd" stroke-width="1.200"><path d="M2 15Q2 3 14 2M5 15Q5 6 14 5M8 15Q8 9 14 8M11 15q0-3 3-4" /><circle cx="13" cy="14" r="1" fill="#fff" /></svg>
            <svg width="18" height="16" viewBox="0 0 18 16" fill="none" stroke="#fff" stroke-width="1.200"><path d="M1 5.500h3l4-4v13l-4-4H1zM10 5q2 3 0 6M12 3q4 5 0 10M14.500 1q5 7 0 14" /></svg>
            <span>ESP</span>
            <time>11:40<br />14/04/2019</time>
            <svg width="26" height="28" viewBox="0 0 26 28"><path d="M1 2h17v13H9l-4 4v-4H1z" fill="#fff" /><path d="M4 6h11M4 9h11M4 12h8" stroke="#111820" /><circle cx="17" cy="19" r="8" fill="#30363c" stroke="#888" /><text x="17" y="23" text-anchor="middle" fill="#fff" font-size="11">2</text></svg>
            <i class="desktop"></i>
        </div>
    </nav>
</main>

<style>
    :global(body) {
        background: #000;
    }

    main {
        display: flex;
        flex-direction: column;
        min-height: 100vh;
        font: 11px/14px "Liberation Sans", Arial, sans-serif;
        color: #d8d8d8;
    }

    button, input, select {
        font: inherit;
        color: inherit;
        box-sizing: border-box;
        margin: 0;
        padding: 0;
        border: 0;
        background: none;
    }

    button {
        display: flex;
        align-items: center;
        justify-content: center;
    }

    .window {
        flex: 1;
        display: flex;
        flex-direction: column;
        border: 4px solid #6e6e6e;
        border-top: 1px solid #444;
        border-left-color: #777;
    }

    .title {
        display: flex;
        align-items: center;
        height: 24px;
        box-sizing: border-box;
        background: linear-gradient(#929292, #6a6a6a);
        border-bottom: 1px solid #444;
        color: #fff;
    }

    .candle-logo {
        width: 16px;
        height: 24px;
        margin-right: 4px;
    }

    .caret {
        border: 4px solid transparent;
        border-top: 5px solid #fff;
        border-bottom: 0;
    }

    .title .caret {
        margin-right: 3px;
    }

    .info {
        width: 12px;
        height: 12px;
        margin: 0 8px 0 12px;
        background: #2c3038;
        border: 1px solid #bbb;
        font-family: "Liberation Serif", serif;
        font-weight: bold;
    }

    .change {
        padding: 1px 2px;
        margin-right: 3px;
        background: linear-gradient(#40e060, #28c828);
        border: 1px solid #50ff50;
        line-height: 12px;
    }

    .controls {
        display: flex;
        gap: 4px;
        margin: 0 2px 0 auto;
    }

    .status {
        display: flex;
        align-items: center;
        justify-content: space-evenly;
        height: 22px;
        box-sizing: border-box;
        padding-right: 16px;
        background: #090909;
        border-bottom: 1px solid #555;
    }

    .status span {
        display: flex;
        align-items: center;
        white-space: pre;
    }

    .doc {
        width: 12px;
        height: 12px;
    }

    .gears {
        width: 16px;
        height: 14px;
    }

    .toolbar {
        display: flex;
        align-items: center;
        height: 49px;
        box-sizing: border-box;
        padding: 0 0 1px 6px;
        background: linear-gradient(#0a0a0a, #202020);
        border-bottom: 1px solid #585858;
    }

    .tools {
        display: flex;
    }

    .tool {
        width: 26px;
        height: 26px;
    }

    .tool svg {
        width: 24px;
        height: 24px;
    }

    .tool.on {
        background: #686868;
    }

    .palette {
        display: grid;
        grid-template-columns: repeat(14, 11px);
        grid-auto-rows: 11px;
        margin-left: 2px;
    }

    .swatch {
        margin: 0 1px 1px 0;
        border-radius: 2px;
        background-image: linear-gradient(rgba(255, 255, 255, 0.3) 40%, transparent 60%);
    }

    .swatch.picked {
        margin: -2px -1px -1px -1px;
    }

    .gap {
        flex: 40;
    }

    .gap.side {
        flex: 30;
    }

    .indicators + .gap.side {
        flex: 31;
    }

    .pick {
        position: relative;
        display: block;
    }

    .pick select {
        appearance: none;
        width: 100%;
        height: 22px;
        padding-left: 4px;
        border: 1px solid #555;
        border-radius: 3px;
        background: #0c0c0c;
    }

    .period {
        width: 101px;
    }

    .unit {
        width: 93px;
    }

    .drop {
        position: absolute;
        right: 2px;
        top: 2px;
        width: 16px;
        height: 17px;
        border-radius: 2px;
        background: linear-gradient(#484848, #141414);
        pointer-events: none;
    }

    .drop::after {
        content: "";
        position: absolute;
        left: 4px;
        top: 7px;
        border: 4px solid transparent;
        border-top: 5px solid #fff;
        border-bottom: 0;
    }

    .units {
        display: flex;
    }

    .spin {
        display: flex;
        width: 77px;
        height: 22px;
        box-sizing: border-box;
        border: 1px solid #555;
        border-radius: 3px;
        background: #0c0c0c;
    }

    .spin input {
        flex: 1;
        min-width: 0;
        text-align: right;
    }

    .spinners {
        display: flex;
        flex-direction: column;
        gap: 1px;
        padding: 2px 1px;
    }

    .spinners button {
        flex: 1;
        width: 14px;
        background: linear-gradient(#484848, #181818);
    }

    .up, .down {
        border: 3px solid transparent;
    }

    .up {
        border-top: 0;
        border-bottom: 4px solid #fff;
    }

    .down {
        border-bottom: 0;
        border-top: 4px solid #fff;
    }

    .indicators {
        display: flex;
        height: 28px;
        box-sizing: border-box;
        border: 1px solid #606060;
        border-radius: 3px;
        background: linear-gradient(#484848, #181818);
    }

    .indicators button {
        width: 34px;
    }

    .indicators .more {
        width: 12px;
        border-left: 1px solid #666;
    }

    .trade {
        display: flex;
        align-items: flex-start;
        height: 47px;
        border-left: 1px solid #666;
        border-radius: 6px;
        background: linear-gradient(#101010, #202020);
    }

    .expand {
        margin: 20px 5px 0 3px;
        border: 4px solid transparent;
        border-left: 4px solid #fff;
        border-right: 0;
    }

    .box {
        border: 1px solid #666;
        border-radius: 3px;
        background: linear-gradient(#404040, #141414);
    }

    .setup {
        width: 18px;
        height: 19px;
        margin: 14px 3px 0 0;
    }

    .wrench {
        width: 14px;
        height: 14px;
    }

    .field {
        display: flex;
        flex-direction: column;
        align-items: center;
        gap: 1px;
    }

    .field input {
        width: 46px;
        height: 22px;
        padding-right: 4px;
        border: 1px solid #555;
        border-radius: 3px;
        background: #0c0c0c;
        text-align: right;
    }

    .group {
        margin-left: 5px;
        padding-left: 3px;
        background: linear-gradient(#666, #333) no-repeat 0 8px / 1px 31px;
    }

    .pair {
        display: flex;
        gap: 3px;
    }

    .order {
        width: 28px;
        height: 28px;
    }

    .order svg {
        width: 24px;
        height: 24px;
    }

    .deal {
        width: 63px;
        height: 28px;
        border-radius: 3px;
        color: #fff;
        align-items: flex-end;
        padding-bottom: 4px;
    }

    .last {
        margin-left: 3px;
    }

    .deal b {
        font-weight: normal;
        font-size: 20px;
        line-height: 19px;
    }

    .deal sup {
        align-self: flex-start;
        line-height: 18px;
    }

    .sell {
        background: linear-gradient(#d84040, #c02828);
        border: 1px solid #e04040;
    }

    .buy {
        background: linear-gradient(#20a820, #0c8c0c);
        border: 1px solid #28b828;
    }

    .stops {
        display: flex;
        flex-direction: column;
        gap: 1px;
        margin-left: 4px;
        padding: 1px 2px 0 5px;
        background: linear-gradient(#666, #333) no-repeat 0 8px / 1px 31px;
    }

    .stops div {
        display: flex;
        align-items: center;
    }

    .stops input[type="checkbox"] {
        appearance: none;
        width: 12px;
        height: 12px;
        background: #3a3a3a;
        border: 1px solid #484848;
    }

    .stops label {
        width: 11px;
        padding-left: 4px;
    }

    .pts {
        width: 18px;
        height: 22px;
        border: 1px solid #444;
        border-radius: 4px;
        color: #484848;
        text-align: center;
    }

    .stops span {
        margin-left: 2px;
    }

    .chart {
        flex: 1;
        display: grid;
        grid-template-columns: 1fr 50px;
        grid-template-rows: 1fr 20px;
        background: #1f1f1f;
    }

    .plot {
        position: relative;
        background: linear-gradient(#333, #000 97%);
        border-right: 1px solid #555;
        border-bottom: 1px solid #555;
    }

    .graph {
        position: absolute;
        inset: 0;
        width: 100%;
        height: 100%;
    }

    .zone {
        fill: rgba(130, 142, 180, 0.45);
    }

    .rise {
        fill: rgba(0, 113, 0, 0.52);
    }

    .fall {
        fill: rgba(112, 0, 0, 0.52);
    }

    .wick {
        stroke: #fff;
    }

    .body {
        stroke: #fff;
        fill: #fff;
    }

    .body.u {
        fill: #59dc59;
    }

    .body.d {
        fill: #e76b6b;
    }

    .graph .boll {
        fill: none;
        stroke: #8400c8;
        stroke-width: 1.3;
    }

    .graph .dashed {
        stroke-dasharray: 12 12;
    }

    .graph .mm {
        fill: none;
        stroke: #d8645c;
        stroke-width: 1.2;
    }

    .cross {
        stroke: #a84040;
    }

    .legend {
        position: absolute;
        left: 1px;
        top: 0;
        display: flex;
        align-items: center;
        gap: 3px;
    }

    .series {
        display: flex;
        align-items: center;
        gap: 2px;
        height: 16px;
        padding: 0 2px;
        border: 1px solid #444;
        background: linear-gradient(#303030, #101010);
        box-sizing: border-box;
    }

    .series svg {
        width: 14px;
        height: 14px;
    }

    .level {
        position: absolute;
        left: 1px;
        transform: translateY(-13px);
    }

    .readout {
        position: absolute;
        width: 183px;
        box-sizing: border-box;
        margin: 0;
        padding: 2px;
        border: 1px solid #505050;
        border-radius: 3px;
        background: rgba(38, 38, 38, 0.7);
    }

    .readout div {
        display: flex;
        justify-content: space-between;
    }

    .readout dd {
        margin: 0;
    }

    .readout.boll, .readout.mm {
        padding: 2px 4px 2px 2px;
    }

    .readout.boll {
        color: #8400c8;
        border-color: #8400c8;
    }

    .readout.mm {
        color: #d8645c;
        border-color: #d8645c;
    }

    .gain {
        color: #30c030;
    }

    .credit {
        position: absolute;
        left: 3px;
        bottom: -1px;
        margin: 0;
    }

    .prices {
        position: relative;
    }

    .tick {
        position: absolute;
        left: 7px;
        transform: translateY(-7px);
    }

    .tick::before {
        content: "";
        position: absolute;
        left: -7px;
        top: 7px;
        width: 4px;
        border-top: 1px solid #777;
    }

    .strong {
        font-size: 12px;
        font-weight: bold;
        color: #f0f0f0;
    }

    .tag {
        position: absolute;
        left: 5px;
        right: 0;
        height: 15px;
        box-sizing: border-box;
        border: 1px solid #606060;
        background: linear-gradient(#303030, #101010);
        line-height: 13px;
        transform: translateY(-7px);
    }

    .tag.boll {
        color: #8400c8;
    }

    .tag.mm {
        color: #d8645c;
    }

    .tag.last {
        margin: 0;
        background: #fcc810;
        border-color: #fcd840;
        color: #000;
    }

    .tag.cursor {
        background: #ff0;
        border-color: #ff0;
        color: #000;
    }

    .times {
        position: relative;
        grid-column: 1 / 2;
    }

    .times span {
        position: absolute;
        top: 6px;
        transform: translateX(-50%);
        white-space: nowrap;
    }

    .times span::before {
        content: "";
        position: absolute;
        left: 50%;
        top: -6px;
        height: 4px;
        border-left: 1px solid #777;
    }

    .times .now {
        padding: 0 1px;
        background: #ff0;
        color: #000;
    }

    .bottom {
        display: flex;
        align-items: center;
        height: 31px;
        box-sizing: border-box;
        padding: 2px 0 0 1px;
        border-top: 1px solid #555;
        background: linear-gradient(#1c1c1c, #080808);
    }

    .share {
        gap: 5px;
        width: 71px;
        height: 22px;
        border-radius: 3px;
        background: linear-gradient(#2c86c4, #1c64a0);
    }

    .mini {
        width: 18px;
        height: 18px;
        margin-left: 9px;
    }

    .book {
        margin: 0 7px 0 9px;
    }

    .scroll {
        flex: 1;
        display: flex;
        height: 16px;
        margin-right: 1px;
    }

    .scroll button {
        width: 15px;
        border: 1px solid #555;
        background: #181818;
    }

    .prev, .next {
        border: 3px solid transparent;
    }

    .prev {
        border-left: 0;
        border-right: 4px solid #fff;
    }

    .next {
        border-right: 0;
        border-left: 4px solid #fff;
    }

    .track {
        flex: 1;
        display: flex;
        justify-content: flex-end;
        border: 1px solid #555;
        border-width: 1px 0;
        background: #0a0a0a;
    }

    .thumb {
        width: 54%;
        border-left: 1px solid #555;
        border-right: 1px solid #555;
        background: linear-gradient(#222, #101010);
        color: #777;
        text-align: center;
    }

    .zoom {
        width: 28px;
    }

    .zoom svg {
        width: 20px;
        height: 20px;
    }

    .taskbar {
        display: flex;
        height: 40px;
        background: linear-gradient(90deg, #0a0e12, #070d18);
        font: 11px/22px "Open Sans", sans-serif;
        color: #fff;
    }

    .start {
        width: 48px;
    }

    .search {
        display: flex;
        align-items: center;
        gap: 9px;
        width: 344px;
        box-sizing: border-box;
        padding: 0 14px 0 9px;
        background: #f2f2f2;
        color: #333;
    }

    .search input {
        flex: 1;
        outline: 0;
        font-size: 14px;
    }

    .search input::placeholder {
        color: #444;
        opacity: 1;
    }

    .app {
        width: 49px;
    }

    .open {
        box-shadow: inset 0 -2px #76b9ed;
    }

    .active {
        background: #a0561e;
        box-shadow: inset 0 -2px #ff7010;
    }

    .tray {
        display: flex;
        align-items: center;
        gap: 10px;
        margin-left: auto;
    }

    .chevron {
        margin-left: 10px;
    }

    time {
        margin: 0 4px 0 6px;
        text-align: center;
        line-height: 18px;
    }

    .desktop {
        align-self: stretch;
        margin: 0 3px 0 4px;
        border-left: 1px solid #555;
    }
</style>
